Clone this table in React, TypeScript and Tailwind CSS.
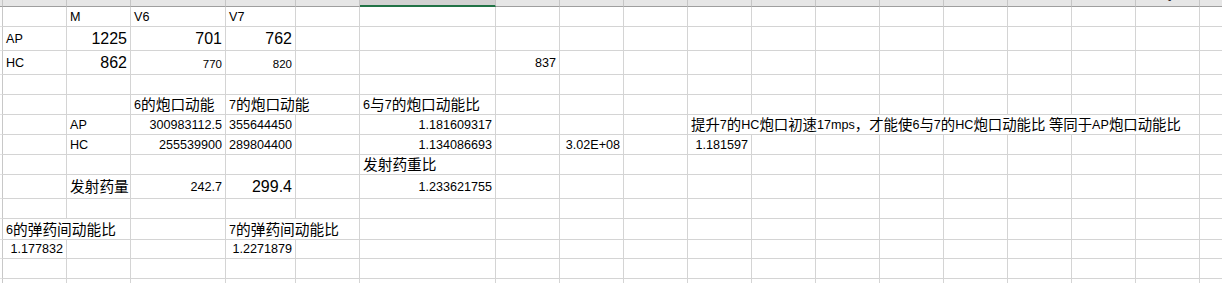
import React from "react";

type Cell = {
  t: string;
  r?: boolean;
  size?: "n" | "big" | "sm";
  span?: 2 | 8;
  tight?: boolean;
};

type Row = { tall?: boolean; cells: Record<string, Cell> };

const LETTERS = ["A", "B", "C", "D", "E", "F", "G", "H", "I", "J", "K", "L", "M", "N", "O", "P", "Q", "R"];

const LONG_NOTE = "提升7的HC炮口初速17mps，才能使6与7的HC炮口动能比 等同于AP炮口动能比";

const ROWS: Row[] = [
  { cells: { B: { t: "M" }, C: { t: "V6" }, D: { t: "V7" } } },
  {
    tall: true,
    cells: {
      A: { t: "AP" },
      B: { t: "1225", r: true, size: "big" },
      C: { t: "701", r: true, size: "big" },
      D: { t: "762", r: true, size: "big" },
    },
  },
  {
    tall: true,
    cells: {
      A: { t: "HC" },
      B: { t: "862", r: true, size: "big" },
      C: { t: "770", r: true, size: "sm" },
      D: { t: "820", r: true, size: "sm" },
      G: { t: "837", r: true },
    },
  },
  { cells: {} },
  {
    cells: {
      C: { t: "6的炮口动能" },
      D: { t: "7的炮口动能", span: 2 },
      F: { t: "6与7的炮口动能比" },
    },
  },
  {
    cells: {
      B: { t: "AP" },
      C: { t: "300983112.5", r: true },
      D: { t: "355644450", r: true },
      F: { t: "1.181609317", r: true },
      J: { t: LONG_NOTE, span: 8, tight: true },
    },
  },
  {
    cells: {
      B: { t: "HC" },
      C: { t: "255539900", r: true },
      D: { t: "289804400", r: true },
      F: { t: "1.134086693", r: true },
      H: { t: "3.02E+08", r: true },
      J: { t: "1.181597", r: true },
    },
  },
  { cells: { F: { t: "发射药重比" } } },
  {
    tall: true,
    cells: {
      B: { t: "发射药量" },
      C: { t: "242.7", r: true },
      D: { t: "299.4", r: true, size: "big" },
      F: { t: "1.233621755", r: true },
    },
  },
  { cells: {} },
  {
    cells: {
      A: { t: "6的弹药间动能比", span: 2 },
      D: { t: "7的弹药间动能比", span: 2 },
    },
  },
  { cells: { A: { t: "1.177832", r: true }, D: { t: "1.2271879", r: true } } },
  { cells: {} },
  { cells: {} },
];

const CJK = /[\u3000-\u9fff\uff00-\uffef]/;

// CJK runs get the wider fallback size, latin runs keep the cell size
function CellText({ s, tight }: { s: string; tight?: boolean }) {
  const parts = s.match(/[\u3000-\u9fff\uff00-\uffef]+|[^\u3000-\u9fff\uff00-\uffef]+/g) ?? [];
  return (
    <>
      {parts.map((p, i) =>
        CJK.test(p) ? (
          <span key={i} className={tight ? "text-[14.4px]" : "text-[14.7px]"}>
            {p}
          </span>
        ) : (
          <span key={i} className="whitespace-pre">
            {p}
          </span>
        )
      )}
    </>
  );
}

function sizeClass(size: Cell["size"], tall?: boolean) {
  if (size === "big") return "text-[16px] leading-[19px] pb-[2px]";
  if (size === "sm") return tall ? "text-[11.5px] leading-[14px] pb-[3px]" : "text-[11.5px] leading-[14px] pb-[1px]";
  return tall ? "text-[12.6px] leading-[15px] pb-[3px]" : "text-[12.6px] leading-[15px] pb-[1px]";
}

function SheetRow({ row }: { row: Row }) {
  const out: React.ReactNode[] = [
    <div key="stub" className="border-r border-b border-r-[#c8c8c8] border-b-[#e2e2e2]" />,
  ];
  let skip = 0;
  LETTERS.forEach((col) => {
    if (skip > 0) {
      skip--;
      return;
    }
    const c = row.cells[col];
    const span = c?.span === 8 ? "col-span-8" : c?.span === 2 ? "col-span-2" : "";
    if (c?.span) skip = c.span - 1;
    out.push(
      <div
        key={col}
        className={`flex items-end whitespace-nowrap border-r border-b border-[#d4d4d4] px-[3px] text-black ${span} ${
          c?.r ? "justify-end" : "justify-start"
        } ${sizeClass(c?.size, row.tall)}`}
      >
        {c && <CellText s={c.t} tight={c.tight} />}
      </div>
    );
  });
  return <>{out}</>;
}

export default function App() {
  return (
    <div className="w-[1222px] h-[283px] overflow-hidden bg-white font-['Liberation_Sans','Noto_Sans_CJK_SC',sans-serif]">
      <div className="grid grid-cols-[3px_64px_64px_95px_70px_64px_136px_repeat(11,64px)_64px] grid-rows-[7px_20px_24px_24px_20px_20px_20px_20px_20px_24px_20px_21px_19px_20px_20px]">
        {/* column headers, scrolled so only their bottom edge shows */}
        <div className="bg-[#e6e6e6] border-r border-b border-r-[#c6c6c6] border-b-[#9e9e9e]" />
        {LETTERS.map((l) => (
          <div
            key={l}
            className={`overflow-hidden border-r border-r-[#c6c6c6] ${
              l === "F" ? "bg-[#d2d2d2] border-b-2 border-b-[#217346]" : "bg-[#e6e6e6] border-b border-b-[#9e9e9e]"
            }`}
          >
            <div className="-mt-[16px] flex h-[20px] items-center justify-center text-[13px] text-[#262626]">{l}</div>
          </div>
        ))}
        {ROWS.map((row, i) => (
          <SheetRow key={i} row={row} />
        ))}
      </div>
    </div>
  );
}
